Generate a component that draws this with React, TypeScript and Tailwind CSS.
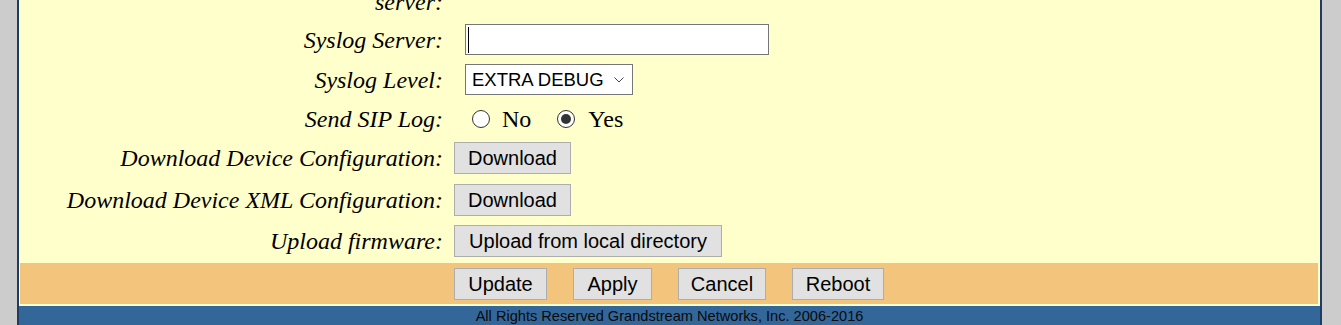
import React from 'react';

const LABEL =
  "w-[424px] shrink-0 text-right italic text-[24px] leading-[28px] text-black font-['Liberation_Serif',serif]";

const BTN =
  "h-[32px] bg-[#e1e1e1] border border-[#adadad] text-[20px] leading-[30px] text-black text-center font-['Liberation_Sans',sans-serif]";

function Row({ label, h, children }: { label: string; h: string; children?: React.ReactNode }) {
  return (
    <div className={`flex items-center ${h}`}>
      <div className={LABEL}>{label}</div>
      {children}
    </div>
  );
}

function Radio({ checked }: { checked?: boolean }) {
  return (
    <span className="w-[18px] h-[18px] rounded-full border border-[#333333] bg-white flex items-center justify-center shrink-0">
      {checked && <span className="w-[10px] h-[10px] rounded-full bg-[#333333]" />}
    </span>
  );
}

export default function App() {
  return (
    <div className="w-[1341px] h-[325px] overflow-hidden bg-[#cccccc]">
      <div className="ml-[17px] w-[1305px] h-[325px] overflow-hidden border-x-2 border-[#1f3b62] bg-[#ffffcc]">
        {/* wrapped label, only its last line shows */}
        <div className="flex items-end h-[20px] pb-[4px]">
          <div className={LABEL}>server:</div>
        </div>

        <Row label="Syslog Server:" h="h-[39px]">
          <div className="relative ml-[22px] w-[304px] h-[31px] bg-white border border-[#767676]">
            <span className="absolute left-[2px] top-[2px] w-px h-[26px] bg-black" />
          </div>
        </Row>

        <Row label="Syslog Level:" h="h-[41px]">
          <div className="ml-[22px] w-[168px] h-[31px] bg-white border border-[#767676] flex items-center pl-[6px] pr-[8px] justify-between">
            <span className="text-[18.5px] leading-[22px] text-black font-['Liberation_Sans',sans-serif]">
              EXTRA DEBUG
            </span>
            <svg width="10" height="6" viewBox="0 0 10 6">
              <path d="M0.5 0.5 L5 5 L9.5 0.5" fill="none" stroke="#444444" strokeWidth="1" />
            </svg>
          </div>
        </Row>

        <Row label="Send SIP Log:" h="h-[37px]">
          <div className="ml-[29px] flex items-center text-[24px] leading-[28px] text-black font-['Liberation_Serif',serif]">
            <Radio />
            <span className="ml-[12px]">No</span>
            <span className="ml-[26px]">
              <Radio checked />
            </span>
            <span className="ml-[13px]">Yes</span>
          </div>
        </Row>

        <Row label="Download Device Configuration:" h="h-[42px]">
          <button className={`ml-[11px] w-[117px] ${BTN}`}>Download</button>
        </Row>

        <Row label="Download Device XML Configuration:" h="h-[42px]">
          <button className={`ml-[11px] w-[117px] ${BTN}`}>Download</button>
        </Row>

        <Row label="Upload firmware:" h="h-[40px]">
          <button className={`ml-[11px] w-[268px] ${BTN}`}>Upload from local directory</button>
        </Row>

        <div className="mt-[2px] ml-px mr-[2px] h-[41px] bg-[#f2c47c] flex items-center pl-[434px] gap-[26px]">
          <button className={`w-[93px] ${BTN}`}>Update</button>
          <button className={`w-[79px] ${BTN}`}>Apply</button>
          <button className={`w-[88px] ${BTN}`}>Cancel</button>
          <button className={`w-[92px] ${BTN}`}>Reboot</button>
        </div>

        <div className="mt-[2px] h-[22px] bg-[#336699] pt-[1px] text-center text-[14.6px] leading-[19px] text-[#0a0a0a] font-['Liberation_Sans',sans-serif]">
          All Rights Reserved Grandstream Networks, Inc. 2006-2016
        </div>
      </div>
    </div>
  );
}
